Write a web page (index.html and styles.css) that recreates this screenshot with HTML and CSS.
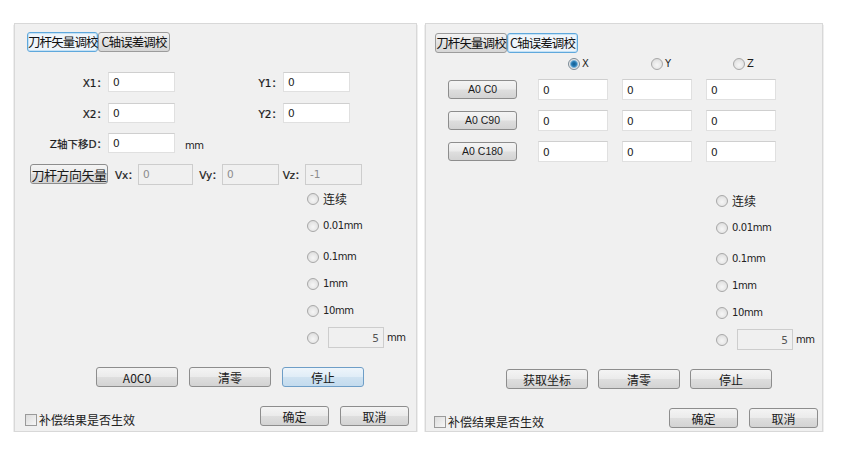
FILE: index.html
```html
<!DOCTYPE html>
<html lang="zh-CN">
<head>
  <meta charset="UTF-8">
  <title>刀杆矢量调校</title>
  <link rel="stylesheet" href="styles.css">
</head>
<body>
  <div class="page">

    <!-- 左侧：刀杆矢量调校 -->
    <div class="dialog dialog-left">
      <div class="tabs">
        <span class="tab active">刀杆矢量调校</span><span class="tab">C轴误差调校</span>
      </div>

      <div class="field-row row-1">
        <label class="lbl lbl-a">X1：</label><input class="txt" value="0">
        <label class="lbl lbl-b">Y1：</label><input class="txt" value="0">
      </div>
      <div class="field-row row-2">
        <label class="lbl lbl-a">X2：</label><input class="txt" value="0">
        <label class="lbl lbl-b">Y2：</label><input class="txt" value="0">
      </div>
      <div class="field-row row-3">
        <label class="lbl lbl-a">Z轴下移D：</label><input class="txt" value="0">
        <span class="unit unit-z">mm</span>
      </div>
      <div class="field-row row-4">
        <button class="btn btn-vec">刀杆方向矢量</button>
        <label class="lbl lbl-v lbl-vx">Vx：</label><input class="txt txt-off w55" value="0" disabled>
        <label class="lbl lbl-v lbl-vy">Vy：</label><input class="txt txt-off w57" value="0" disabled>
        <label class="lbl lbl-v lbl-vz">Vz：</label><input class="txt txt-off w57" value="-1" disabled>
      </div>

      <div class="radios radios-left">
        <div class="radio-row"><span class="radio"></span><span class="radio-text cn">连续</span></div>
        <div class="radio-row"><span class="radio"></span><span class="radio-text">0.01mm</span></div>
        <div class="radio-row gap"><span class="radio"></span><span class="radio-text">0.1mm</span></div>
        <div class="radio-row"><span class="radio"></span><span class="radio-text">1mm</span></div>
        <div class="radio-row"><span class="radio"></span><span class="radio-text">10mm</span></div>
        <div class="radio-row">
          <span class="radio"></span>
          <input class="txt txt-off step" value="5" disabled>
          <span class="unit">mm</span>
        </div>
      </div>

      <div class="actions actions-left">
        <button class="btn btn-act">A0C0</button>
        <button class="btn btn-act">清零</button>
        <button class="btn btn-act hot">停止</button>
      </div>

      <div class="footer footer-left">
        <label class="check"><span class="box"></span>补偿结果是否生效</label>
        <div class="footer-btns">
          <button class="btn btn-ok">确定</button>
          <button class="btn btn-ok">取消</button>
        </div>
      </div>
    </div>

    <!-- 右侧：C轴误差调校 -->
    <div class="dialog dialog-right">
      <div class="tabs">
        <span class="tab">刀杆矢量调校</span><span class="tab active">C轴误差调校</span>
      </div>

      <div class="axis-grid">
        <span></span>
        <div class="axis-head"><span class="radio on"></span><span class="axis-name">X</span></div>
        <div class="axis-head"><span class="radio"></span><span class="axis-name">Y</span></div>
        <div class="axis-head"><span class="radio"></span><span class="axis-name">Z</span></div>

        <button class="btn btn-pos">A0 C0</button>
        <input class="txt cell" value="0"><input class="txt cell" value="0"><input class="txt cell" value="0">

        <button class="btn btn-pos">A0 C90</button>
        <input class="txt cell" value="0"><input class="txt cell" value="0"><input class="txt cell" value="0">

        <button class="btn btn-pos">A0 C180</button>
        <input class="txt cell" value="0"><input class="txt cell" value="0"><input class="txt cell" value="0">
      </div>

      <div class="radios radios-right">
        <div class="radio-row"><span class="radio"></span><span class="radio-text cn">连续</span></div>
        <div class="radio-row"><span class="radio"></span><span class="radio-text">0.01mm</span></div>
        <div class="radio-row gap"><span class="radio"></span><span class="radio-text">0.1mm</span></div>
        <div class="radio-row"><span class="radio"></span><span class="radio-text">1mm</span></div>
        <div class="radio-row"><span class="radio"></span><span class="radio-text">10mm</span></div>
        <div class="radio-row">
          <span class="radio"></span>
          <input class="txt txt-off step" value="5" disabled>
          <span class="unit">mm</span>
        </div>
      </div>

      <div class="actions actions-right">
        <button class="btn btn-act">获取坐标</button>
        <button class="btn btn-act">清零</button>
        <button class="btn btn-act">停止</button>
      </div>

      <div class="footer footer-right">
        <label class="check"><span class="box"></span>补偿结果是否生效</label>
        <div class="footer-btns">
          <button class="btn btn-ok">确定</button>
          <button class="btn btn-ok">取消</button>
        </div>
      </div>
    </div>

  </div>
</body>
</html>
```

FILE: styles.css
```css
body {
  margin: 0;
  background-color: #fff;
  font-family: "Liberation Sans", "Noto Sans CJK SC", sans-serif;
  font-size: 12px;
  color: #1e1e1e;
}
.page {
  display: flex;
  gap: 8px;
  padding: 23px 0 0 14px;
}
.dialog {
  box-sizing: border-box;
  height: 409px;
  background-color: #f0f0f0;
  border: 1px solid #d8d8d8;
  box-shadow: 0 2px 1px #9a9a9a;
}
.dialog-left {
  width: 403px;
}
.dialog-right {
  width: 398px;
}

/* 选项卡 */
.tabs {
  display: flex;
  height: 20px;
}
.dialog-left .tabs {
  margin: 8px 0 0 12px;
}
.dialog-right .tabs {
  margin: 9px 0 0 9px;
}
.tab {
  box-sizing: border-box;
  height: 20px;
  width: 72px;
  border: 1px solid #9c9c9c;
  border-radius: 3px;
  background: linear-gradient(#f3f3f3, #e2e2e2 50%, #d6d6d6);
  font-family: "Noto Sans CJK SC", sans-serif;
  font-size: 12.5px;
  line-height: 17px;
  text-align: center;
  white-space: nowrap;
  letter-spacing: -0.9px;
  color: #111;
}
.tab.active {
  width: 71px;
  border: 1px solid #5fa8dc;
  background: #eef5fb;
  box-shadow: inset 0 0 0 1px #c4e1f5;
}

/* 输入行 */
.field-row {
  display: flex;
  align-items: center;
  height: 20px;
}
.row-1 { margin-top: 20px; }
.row-2 { margin-top: 11px; }
.row-3 { margin-top: 10px; }
.row-4 { margin-top: 11px; }
.lbl {
  box-sizing: border-box;
  text-align: right;
  font-family: "DejaVu Sans", "Noto Sans CJK SC", sans-serif;
  font-size: 10.5px;
  color: #1a1a1a;
  white-space: nowrap;
  -webkit-text-stroke: 0.2px #1a1a1a;
}
.lbl-a { width: 93px; padding-right: 1px; }
.lbl-b { width: 108px; padding-right: 1px; }
.lbl-vx { width: 30px; }
.lbl-vy { width: 29px; }
.lbl-vz { width: 26px; }
.lbl-v { padding-right: 0; letter-spacing: -0.3px; }

.txt {
  box-sizing: border-box;
  width: 67px;
  height: 20px;
  margin: 0;
  padding: 0 0 0 4px;
  border: 1px solid #e0e0e0;
  border-top-color: #cfcfcf;
  background: #fff;
  font-family: "DejaVu Sans", sans-serif;
  font-size: 10.5px;
  color: #222;
  outline: none;
}
.txt-off {
  background: #f0f0f0;
  border: 1px solid #cdcdcd;
  color: #8c8c8c;
  height: 21px;
}
.w55 { width: 55px; }
.w57 { width: 57px; }
.unit {
  font-family: "DejaVu Sans", sans-serif;
  font-size: 10px;
  letter-spacing: -0.5px;
  color: #222;
}
.unit-z {
  margin: 4px 0 0 10px;
}

/* 按钮 */
.btn {
  box-sizing: border-box;
  height: 20px;
  padding: 0;
  border: 1px solid #8d8d8d;
  border-radius: 3px;
  background: linear-gradient(#f4f4f4, #ebebeb 48%, #dedede 52%, #d3d3d3);
  font-family: "Noto Sans CJK SC", sans-serif;
  font-size: 12px;
  line-height: 17px;
  color: #1a1a1a;
  white-space: nowrap;
}
.btn.hot {
  border-color: #6e9ec7;
  background: linear-gradient(#eef5fb, #e0edf7 48%, #cfe2f1 52%, #c3dbee);
}
.btn-vec {
  width: 78px;
  margin-left: 15px;
  font-size: 13px;
  letter-spacing: -0.5px;
}
.btn-act {
  width: 82px;
}
.btn-ok {
  width: 69px;
}
.btn-pos {
  width: 69px;
  height: 19px;
  font-family: "Liberation Sans", sans-serif;
  font-size: 10.5px;
  align-self: center;
}

/* 单选框 */
.radio {
  box-sizing: border-box;
  flex: none;
  width: 12px;
  height: 12px;
  border: 1px solid #a8a8a8;
  border-radius: 50%;
  background: radial-gradient(circle at 50% 60%, #f6f6f6 0, #e6e6e6 55%, #d2d2d2 100%);
}
.radio.on {
  background: radial-gradient(circle, #0f5b8f 0, #2b7fb8 2.5px, #7cb3d8 3.5px, #e8e8e8 4.5px);
  border-color: #7a8a96;
}
.radios {
  display: flex;
  flex-direction: column;
}
.radios-left {
  margin-top: 1px;
  padding-left: 292px;
}
.radios-right {
  margin-top: 25px;
  padding-left: 290px;
}
.radio-row {
  display: flex;
  align-items: center;
  height: 27px;
}
.radio-row.gap {
  margin-top: 4px;
}
.radio-text {
  margin-left: 4px;
  font-family: "DejaVu Sans", sans-serif;
  font-size: 10px;
  letter-spacing: -0.4px;
  color: #222;
}
.radio-text.cn {
  font-family: "Noto Sans CJK SC", sans-serif;
  font-size: 12px;
  letter-spacing: 0;
}
.step {
  width: 56px;
  margin-left: 9px;
  margin-right: 3px;
  padding: 0 4px 0 0;
  text-align: right;
  color: #555;
}

/* 操作按钮行 */
.actions {
  display: flex;
  gap: 10px;
  margin-top: 16px;
}
.actions-left {
  padding-left: 81px;
  gap: 11px;
}
.actions-right {
  padding-left: 80px;
}

/* 底部 */
.footer {
  display: flex;
  justify-content: space-between;
  align-items: flex-end;
  margin-top: 19px;
}
.footer-left {
  padding: 0 7px 0 10px;
}
.footer-right {
  padding: 0 4px 0 8px;
}
.footer-btns {
  display: flex;
  gap: 11px;
}
.check {
  display: flex;
  align-items: center;
  margin-bottom: -2px;
  font-family: "Noto Sans CJK SC", sans-serif;
  font-size: 12px;
  color: #222;
}
.box {
  box-sizing: border-box;
  width: 12px;
  height: 12px;
  margin-right: 2px;
  border: 1px solid #9a9a9a;
  background: linear-gradient(135deg, #dcdcdc, #f6f6f6);
}

/* C轴表格 */
.axis-grid {
  display: grid;
  grid-template-columns: 76px 70px 70px 70px;
  grid-template-rows: 12px 21px 21px 21px;
  column-gap: 14px;
  row-gap: 10px;
  margin-top: 4px;
  padding-left: 22px;
}
.axis-grid .axis-head {
  display: flex;
  align-items: center;
  padding-left: 30px;
  margin-bottom: -1px;
}
.axis-name {
  margin-left: 2px;
  font-family: "DejaVu Sans", sans-serif;
  font-size: 10px;
}
.axis-grid .axis-head + .axis-head {
  padding-left: 29px;
}
.axis-grid .axis-head:last-child,
.axis-grid .axis-head:nth-child(4) {
  padding-left: 27px;
}
.cell {
  width: 70px;
  height: 21px;
}
```
